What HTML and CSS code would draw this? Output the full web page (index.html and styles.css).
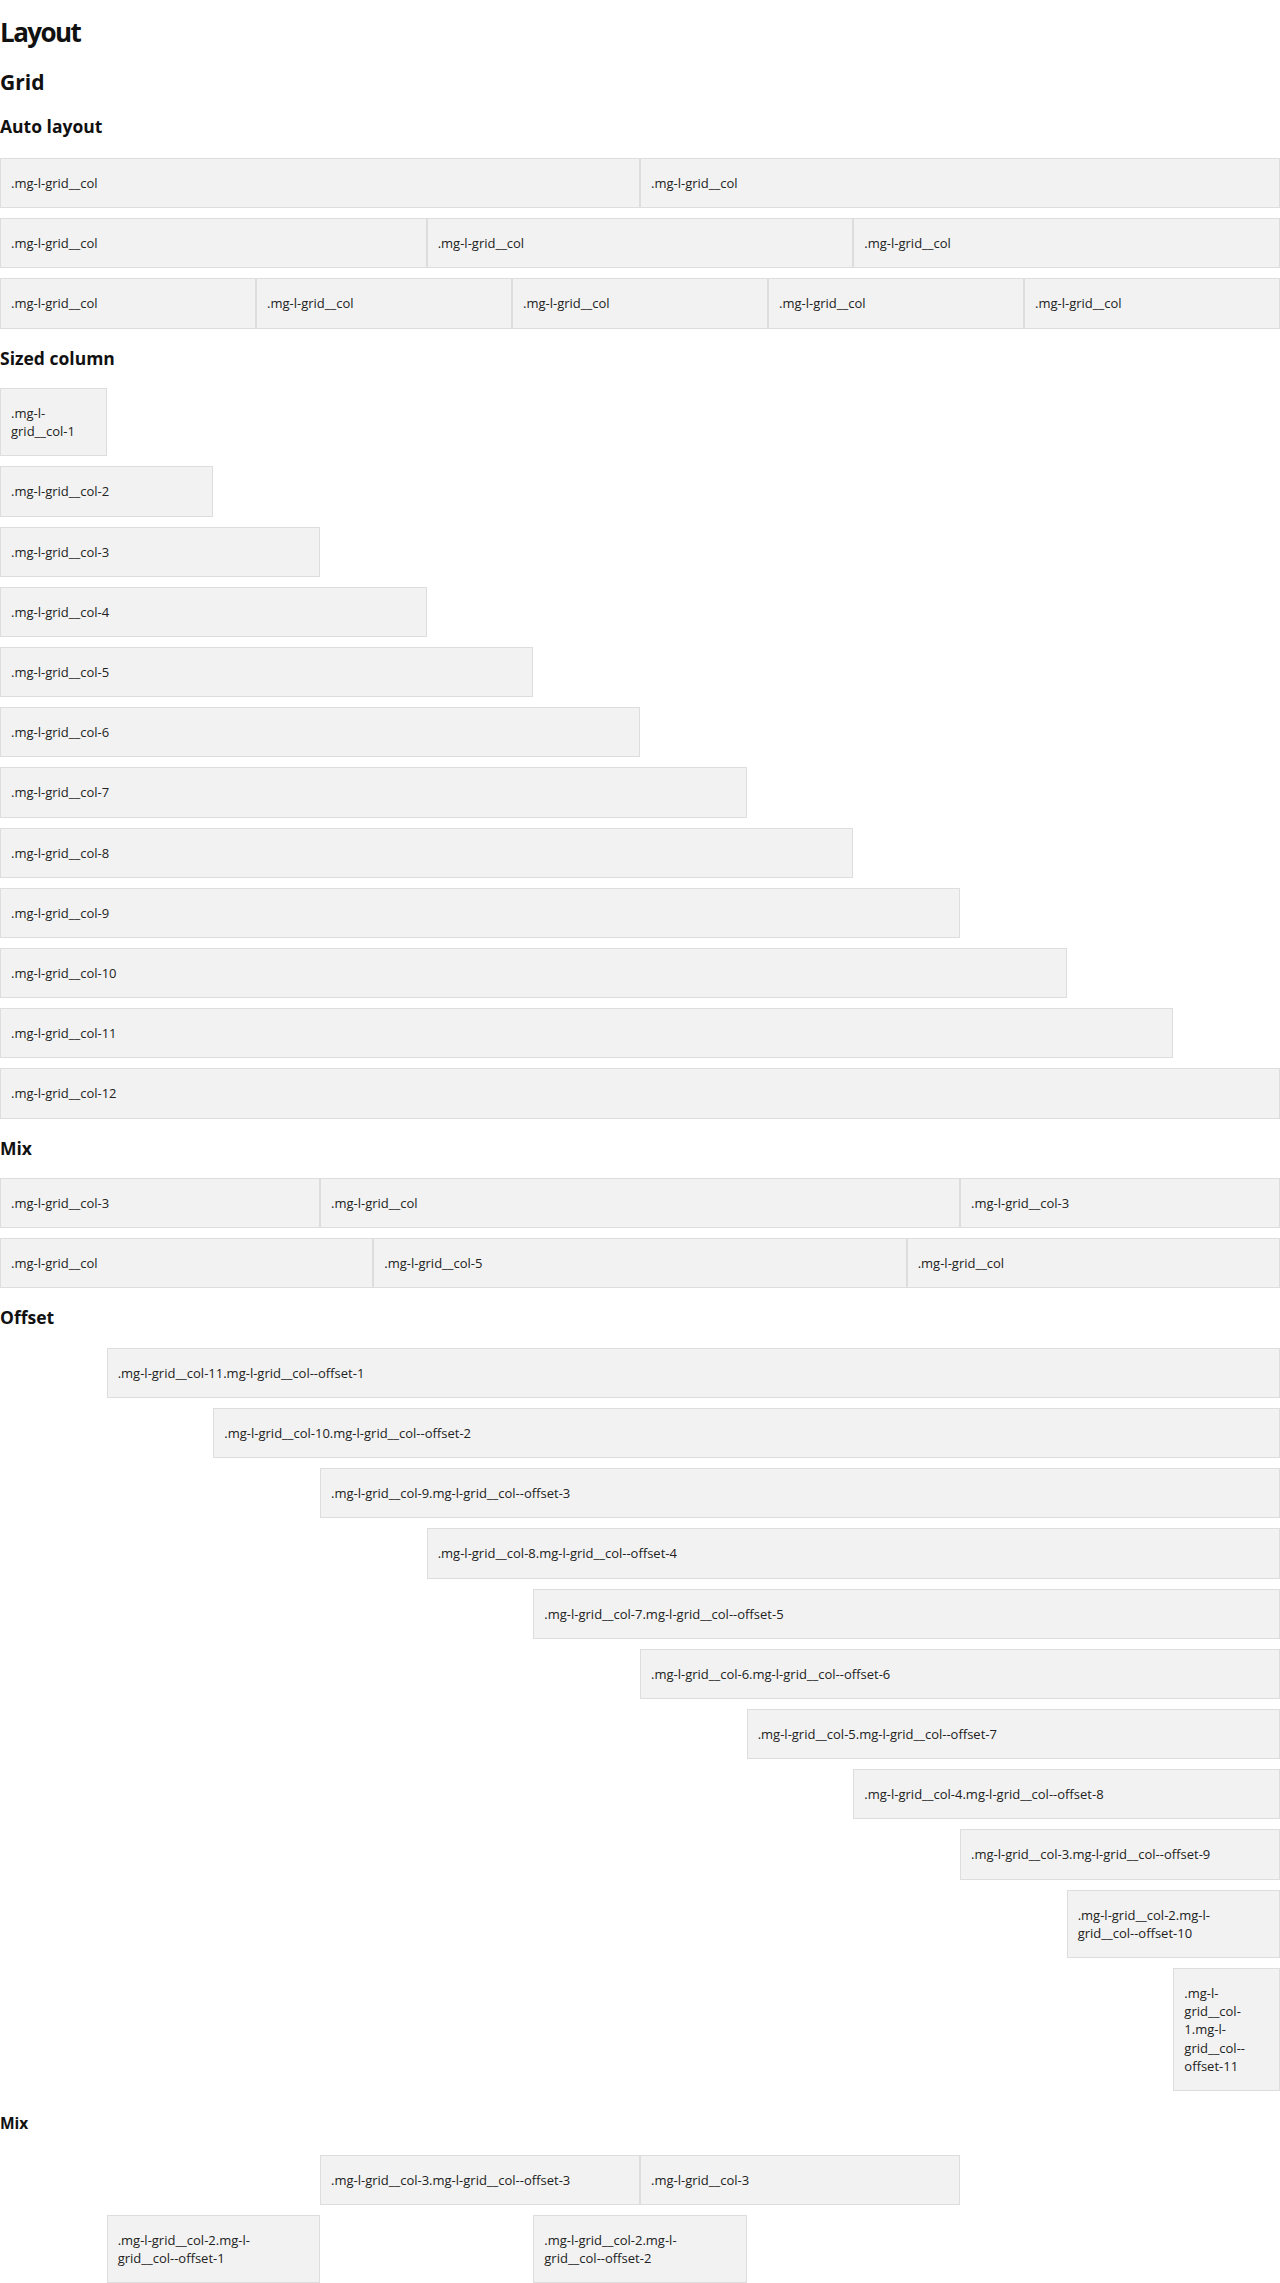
FILE: index.html
```html
<!DOCTYPE html>
<html lang="en">
<head>
<meta charset="utf-8">
<title>Layout</title>
<link rel="stylesheet" href="styles.css">
</head>
<body>
<main class="page">
  <h1 class="title">Layout</h1>
  <h2 class="section">Grid</h2>

  <h3 class="sub sub--first">Auto layout</h3>
  <div class="row"><div class="col">.mg-l-grid__col</div><div class="col">.mg-l-grid__col</div></div>
  <div class="row"><div class="col">.mg-l-grid__col</div><div class="col">.mg-l-grid__col</div><div class="col">.mg-l-grid__col</div></div>
  <div class="row"><div class="col">.mg-l-grid__col</div><div class="col">.mg-l-grid__col</div><div class="col">.mg-l-grid__col</div><div class="col">.mg-l-grid__col</div><div class="col">.mg-l-grid__col</div></div>

  <h3 class="sub">Sized column</h3>
  <div class="row"><div class="col col-1">.mg-l-grid__col-1</div></div>
  <div class="row"><div class="col col-2">.mg-l-grid__col-2</div></div>
  <div class="row"><div class="col col-3">.mg-l-grid__col-3</div></div>
  <div class="row"><div class="col col-4">.mg-l-grid__col-4</div></div>
  <div class="row"><div class="col col-5">.mg-l-grid__col-5</div></div>
  <div class="row"><div class="col col-6">.mg-l-grid__col-6</div></div>
  <div class="row"><div class="col col-7">.mg-l-grid__col-7</div></div>
  <div class="row"><div class="col col-8">.mg-l-grid__col-8</div></div>
  <div class="row"><div class="col col-9">.mg-l-grid__col-9</div></div>
  <div class="row"><div class="col col-10">.mg-l-grid__col-10</div></div>
  <div class="row"><div class="col col-11">.mg-l-grid__col-11</div></div>
  <div class="row"><div class="col col-12">.mg-l-grid__col-12</div></div>

  <h3 class="sub">Mix</h3>
  <div class="row"><div class="col col-3">.mg-l-grid__col-3</div><div class="col">.mg-l-grid__col</div><div class="col col-3">.mg-l-grid__col-3</div></div>
  <div class="row"><div class="col">.mg-l-grid__col</div><div class="col col-5">.mg-l-grid__col-5</div><div class="col">.mg-l-grid__col</div></div>

  <h3 class="sub">Offset</h3>
  <div class="row"><div class="col col-11 off-1">.mg-l-grid__col-11.mg-l-grid__col--offset-1</div></div>
  <div class="row"><div class="col col-10 off-2">.mg-l-grid__col-10.mg-l-grid__col--offset-2</div></div>
  <div class="row"><div class="col col-9 off-3">.mg-l-grid__col-9.mg-l-grid__col--offset-3</div></div>
  <div class="row"><div class="col col-8 off-4">.mg-l-grid__col-8.mg-l-grid__col--offset-4</div></div>
  <div class="row"><div class="col col-7 off-5">.mg-l-grid__col-7.mg-l-grid__col--offset-5</div></div>
  <div class="row"><div class="col col-6 off-6">.mg-l-grid__col-6.mg-l-grid__col--offset-6</div></div>
  <div class="row"><div class="col col-5 off-7">.mg-l-grid__col-5.mg-l-grid__col--offset-7</div></div>
  <div class="row"><div class="col col-4 off-8">.mg-l-grid__col-4.mg-l-grid__col--offset-8</div></div>
  <div class="row"><div class="col col-3 off-9">.mg-l-grid__col-3.mg-l-grid__col--offset-9</div></div>
  <div class="row"><div class="col col-2 off-10">.mg-l-grid__col-2.mg-l-grid__col--offset-10</div></div>
  <div class="row"><div class="col col-1 off-11">.mg-l-grid__col-1.mg-l-grid__col--offset-11</div></div>

  <h4 class="minor">Mix</h4>
  <div class="row"><div class="col col-3 off-3">.mg-l-grid__col-3.mg-l-grid__col--offset-3</div><div class="col col-3">.mg-l-grid__col-3</div></div>
  <div class="row"><div class="col col-2 off-1">.mg-l-grid__col-2.mg-l-grid__col--offset-1</div><div class="col col-2 off-2">.mg-l-grid__col-2.mg-l-grid__col--offset-2</div></div>
</main>
</body>
</html>
```

FILE: styles.css
```css
html, body {
  margin: 0;
  padding: 0;
  background: #ffffff;
}

body {
  font-family: "Open Sans", "Liberation Sans", sans-serif;
  color: #222222;
}

.page {
  display: flex;
  flex-direction: column;
}

.title {
  font-size: 26px;
  line-height: 32px;
  font-weight: 700;
  letter-spacing: -0.06em;
  margin: 16px 0 0;
  color: #111111;
}

.section {
  font-size: 21px;
  line-height: 24px;
  font-weight: 700;
  margin: 22px 0 0;
  color: #111111;
}

.sub {
  font-size: 17.5px;
  line-height: 22px;
  font-weight: 700;
  margin: 8px 0 19.5px;
  color: #111111;
}

.sub--first {
  margin-top: 21px;
  margin-bottom: 21px;
}

.minor {
  font-size: 15.5px;
  line-height: 20px;
  font-weight: 700;
  margin: 12px 0 22px;
  color: #111111;
}

.row {
  display: flex;
  margin-bottom: 10px;
}

.col {
  box-sizing: border-box;
  flex: 1 1 0;
  min-width: 0;
  padding: 15px 14px 15px 10px;
  background: #f2f2f2;
  border: 1px solid #dddddd;
  font-size: 13px;
  line-height: 1.4;
  color: #222222;
}

.col-1 { flex: 0 0 8.333333%; }
.col-2 { flex: 0 0 16.666667%; }
.col-3 { flex: 0 0 25%; }
.col-4 { flex: 0 0 33.333333%; }
.col-5 { flex: 0 0 41.666667%; }
.col-6 { flex: 0 0 50%; }
.col-7 { flex: 0 0 58.333333%; }
.col-8 { flex: 0 0 66.666667%; }
.col-9 { flex: 0 0 75%; }
.col-10 { flex: 0 0 83.333333%; }
.col-11 { flex: 0 0 91.666667%; }
.col-12 { flex: 0 0 100%; }

.off-1 { margin-left: 8.333333%; }
.off-2 { margin-left: 16.666667%; }
.off-3 { margin-left: 25%; }
.off-4 { margin-left: 33.333333%; }
.off-5 { margin-left: 41.666667%; }
.off-6 { margin-left: 50%; }
.off-7 { margin-left: 58.333333%; }
.off-8 { margin-left: 66.666667%; }
.off-9 { margin-left: 75%; }
.off-10 { margin-left: 83.333333%; }
.off-11 { margin-left: 91.666667%; }
```
